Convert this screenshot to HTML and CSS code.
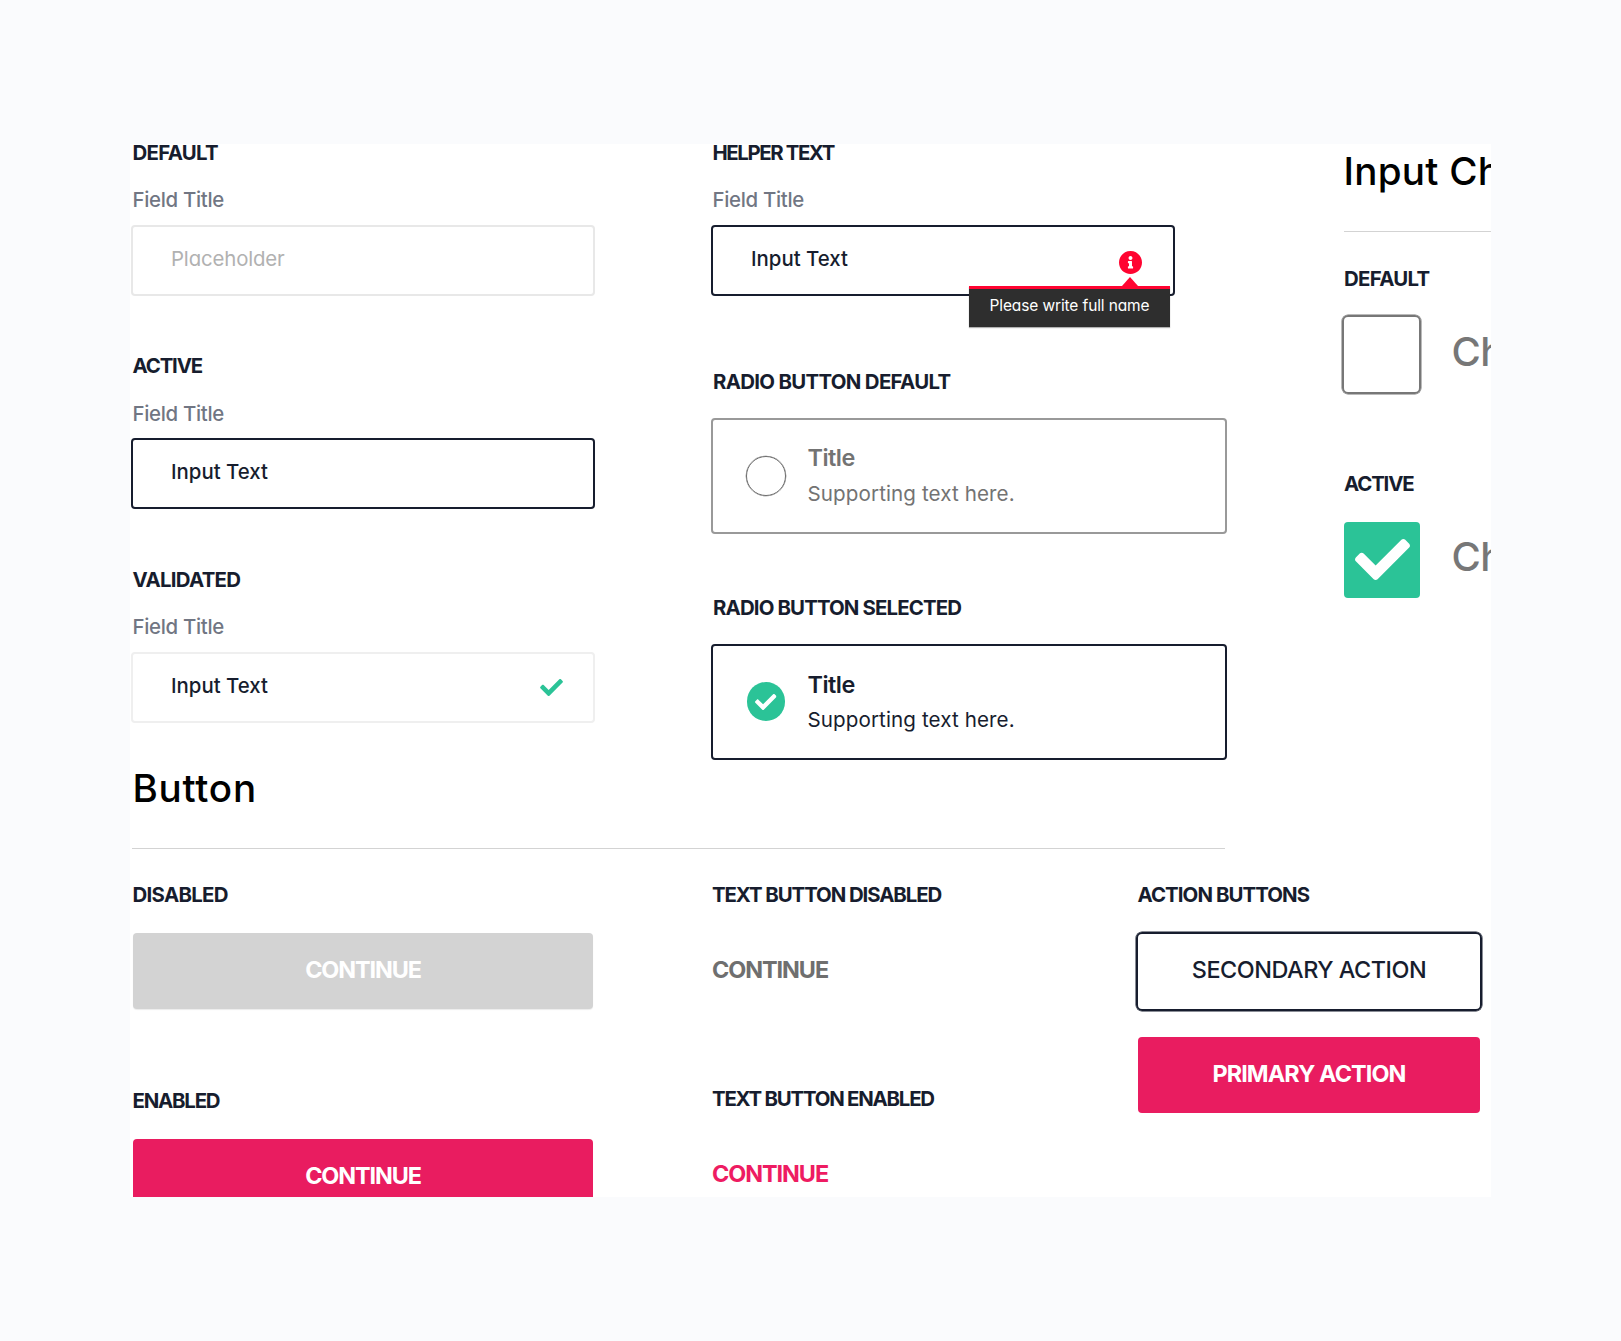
FILE: index.html
```html
<!DOCTYPE html>
<html lang="en">
<head>
<meta charset="utf-8">
<title>Form components</title>
<link rel="stylesheet" href="styles.css">
</head>
<body>
<svg class="sprite" aria-hidden="true">
  <symbol id="check" viewBox="0 65 512 382"><path d="M173.898 439.404l-166.4-166.4c-9.997-9.997-9.997-26.206 0-36.204l36.203-36.204c9.997-9.998 26.207-9.998 36.204 0L192 312.69 432.095 72.596c9.997-9.997 26.207-9.997 36.204 0l36.203 36.204c9.997 9.997 9.997 26.206 0 36.204l-294.4 294.401c-9.998 9.997-26.207 9.997-36.204-.001z"/></symbol>
  <symbol id="info" viewBox="8 8 496 496"><path d="M256 8C119.043 8 8 119.083 8 256c0 136.997 111.043 248 248 248s248-111.003 248-248C504 119.083 392.957 8 256 8zm0 110c23.196 0 42 18.804 42 42s-18.804 42-42 42-42-18.804-42-42 18.804-42 42-42zm56 254c0 6.627-5.373 12-12 12h-88c-6.627 0-12-5.373-12-12v-24c0-6.627 5.373-12 12-12h12v-64h-12c-6.627 0-12-5.373-12-12v-24c0-6.627 5.373-12 12-12h64c6.627 0 12 5.373 12 12v100h12c6.627 0 12 5.373 12 12v24z"/></symbol>
</svg>
<main class="board">
  <div class="content">
    <div class="top">
      <section class="inputs">
        <div class="group">
          <h3 class="label">DEFAULT</h3>
          <p class="field-title">Field Title</p>
          <div class="field"><span class="placeholder">Placeholder</span></div>
        </div>
        <div class="group">
          <h3 class="label label-active">ACTIVE</h3>
          <p class="field-title">Field Title</p>
          <div class="field field-active"><span class="value">Input Text</span></div>
        </div>
        <div class="group">
          <h3 class="label">VALIDATED</h3>
          <p class="field-title">Field Title</p>
          <div class="field field-valid"><span class="value">Input Text</span><svg class="valid-icon"><use href="#check"/></svg></div>
        </div>
      </section>
      <section class="choices">
        <div class="group">
          <h3 class="label label-helper">HELPER TEXT</h3>
          <p class="field-title">Field Title</p>
          <div class="field field-active">
            <span class="value">Input Text</span>
            <svg class="info-icon"><use href="#info"/></svg>
            <div class="tooltip">Please write full name</div>
          </div>
        </div>
        <div class="radio-group">
          <h3 class="label label-radio">RADIO BUTTON DEFAULT</h3>
          <div class="radio">
            <span class="dot"></span>
            <div class="radio-text"><p class="radio-title">Title</p><p class="radio-sub">Supporting text here.</p></div>
          </div>
        </div>
        <div class="radio-group">
          <h3 class="label label-selected">RADIO BUTTON SELECTED</h3>
          <div class="radio radio-on">
            <span class="dot"><svg><use href="#check"/></svg></span>
            <div class="radio-text"><p class="radio-title">Title</p><p class="radio-sub">Supporting text here.</p></div>
          </div>
        </div>
      </section>
      <section class="checkboxes">
        <h2 class="heading heading-check">Input Ch</h2>
        <hr class="rule">
        <h3 class="label">DEFAULT</h3>
        <div class="check-row"><span class="box"></span><span class="check-text">Ch</span></div>
        <h3 class="label label-active">ACTIVE</h3>
        <div class="check-row"><span class="box box-on"><svg><use href="#check"/></svg></span><span class="check-text">Ch</span></div>
      </section>
    </div>
    <h2 class="heading heading-button">Button</h2>
    <hr class="rule rule-button">
    <div class="bottom">
      <section class="col">
        <h3 class="label">DISABLED</h3>
        <div class="btn btn-disabled">CONTINUE</div>
        <h3 class="label label-enabled">ENABLED</h3>
        <div class="btn btn-primary">CONTINUE</div>
      </section>
      <section class="col col-text">
        <h3 class="label label-text">TEXT BUTTON DISABLED</h3>
        <div class="text-btn">CONTINUE</div>
        <h3 class="label label-text label-text-on">TEXT BUTTON ENABLED</h3>
        <div class="text-btn text-btn-on">CONTINUE</div>
      </section>
      <section class="col col-actions">
        <h3 class="label label-actions">ACTION BUTTONS</h3>
        <div class="btn btn-secondary">SECONDARY ACTION</div>
        <div class="btn btn-primary btn-action">PRIMARY ACTION</div>
      </section>
    </div>
  </div>
</main>
</body>
</html>
```
FILE: styles.css
```css
* { box-sizing: border-box; margin: 0; padding: 0; }
body {
  min-height: 1341px;
  padding: 144px 130px;
  background: #fafbfd;
  color: #171d2e;
  font-family: Inter, "Liberation Sans", sans-serif;
  font-feature-settings: "cv11";
  white-space: nowrap;
  overflow: hidden;
}
.sprite { display: none; }
.board { width: 1361px; height: 1053px; background: #fff; overflow: hidden; }
.content { width: 1600px; margin-top: -3.2px; padding-left: 1px; }

.top { display: flex; height: 624px; }
.inputs, .choices { display: flex; flex-direction: column; }
.inputs { width: 580px; }
.choices { width: 631px; }

.label { padding-left: 1.5px; font-size: 20.4px; font-weight: 650; line-height: 24px; letter-spacing: -0.7px; }
.label-active { letter-spacing: -1.15px; }
.label-helper { letter-spacing: -1.4px; }
.label-radio { letter-spacing: -0.68px; }
.label-selected { letter-spacing: -0.86px; }
.label-text { letter-spacing: -1.07px; }
.label-text-on { letter-spacing: -1.22px; }
.label-enabled { letter-spacing: -1.2px; }
.label-actions { letter-spacing: -0.92px; }

.group { width: 464px; margin-bottom: 58.2px; }
.field-title { margin-top: 23.6px; padding-left: 1.5px; color: #717683; font-size: 20.4px; font-weight: 500; line-height: 24px; letter-spacing: -0.3px; }
.field {
  position: relative;
  display: flex;
  height: 71px;
  margin-top: 12.6px;
  padding: 20.1px 28px 0 38px;
  border: 2px solid #e8e8e8;
  border-radius: 4px;
  font-size: 20.4px;
  line-height: 24px;
  justify-content: space-between;
}
.field-active { border-color: #171d2e; }
.field-valid { border-color: #efefef; }
.placeholder { color: #b1b1b1; letter-spacing: -0.15px; }
.value { font-weight: 530; letter-spacing: 0; }
.valid-icon { width: 23px; height: 17px; margin: 5.5px 2.5px 0 0; fill: #2bc397; }
.info-icon { width: 23px; height: 23px; margin: 4px 3px 0 0; fill: #ff0431; }
.tooltip {
  position: absolute;
  top: 59px;
  right: 3px;
  width: 201px;
  height: 41px;
  padding-top: 7px;
  border-top: 3px solid #ff0431;
  background: #2e2e2e;
  box-shadow: 0 1px 1px rgba(0, 0, 0, .3);
  color: #fff;
  font-size: 15.5px;
  line-height: 20px;
  letter-spacing: -0.12px;
  text-align: center;
}
.tooltip::before {
  content: "";
  position: absolute;
  top: -12px;
  left: 153px;
  border: solid transparent;
  border-width: 0 8px 9px;
  border-bottom-color: #ff0431;
}

.radio-group { width: 516px; margin-top: 15.5px; margin-bottom: 46.6px; }
.radio-group .label { padding-left: 2px; }
.radio {
  display: flex;
  height: 116px;
  margin-top: 24px;
  padding: 24.8px 0 0 33px;
  border: 2px solid #999;
  border-radius: 4px;
  color: #737373;
}
.dot { width: 40px; height: 40px; margin: 11.3px 21.5px 0 0; border: 1.5px solid #6c6c6c; border-radius: 50%; box-shadow: 0 0 0 .3px #6c6c6c; }
.radio-on { border-color: #171d2e; color: #171d2e; }
.radio-on .dot { display: flex; align-items: center; justify-content: center; border: 0; width: 38.5px; height: 38.5px; margin: 11.8px 22.2px 0 .8px; background: #2bc397; box-shadow: none; }
.dot svg { width: 21.5px; height: 16px; fill: #fff; }
.radio-title { font-size: 23.4px; font-weight: 600; line-height: 28px; letter-spacing: -0.5px; }
.radio-sub { margin-top: 9.3px; font-size: 20.6px; line-height: 24px; letter-spacing: 0.1px; }

.heading { color: #000; font-size: 38.6px; font-weight: 540; line-height: 46px; }
.heading-check { margin-top: 7.4px; padding-left: 1.5px; letter-spacing: 0.25px; }
.heading-button { padding-left: 1.5px; letter-spacing: 0.75px; }
.rule { height: 1px; margin: 37px 0 0 2px; border: 0; background: #d3d3d3; }
.rule-button { width: 1093px; margin-left: 1px; }
.checkboxes .label { margin-top: 34.6px; padding-left: 2px; }
.checkboxes .label-active { margin-top: 76.6px; }
.check-row { display: flex; margin-top: 24.4px; }
.box { width: 79px; height: 79px; margin: 0 1px 1px 0; border: 2px solid #777; border-radius: 6px; box-shadow: 0 0 0 .5px #777; }
.box-on { display: flex; align-items: center; justify-content: center; width: 76px; height: 76px; margin: 2px 2px 2px; border: 0; border-radius: 4px; background: #2bc397; box-shadow: none; }
.box-on svg { width: 55px; height: 41px; margin-bottom: 1px; fill: #fff; }
.check-text { padding: 12.5px 0 0 29.5px; color: #777; font-size: 40px; font-weight: 550; line-height: 48px; letter-spacing: -0.5px; }

.bottom { display: flex; margin-top: 34.3px; }
.col { width: 579px; padding-left: 1px; }
.bottom .col:first-child { width: 580px; padding-left: 2px; }
.col .label { padding-left: 0; }
.bottom .col:first-child .label { margin-left: -.5px; }
.btn {
  width: 460px;
  height: 76px;
  margin-top: 26px;
  padding-top: 23px;
  border-radius: 4px;
  color: #fff;
  font-size: 23.4px;
  font-weight: 650;
  line-height: 28px;
  letter-spacing: -1.1px;
  text-align: center;
}
.btn-disabled { background: #d3d3d3; box-shadow: 0 1px 1px rgba(0, 0, 0, .08); }
.btn-primary { background: #e91c60; }
.col .label-enabled { margin-top: 79.8px; }
.col-text { width: 425px; }
.col .label-text { padding-left: 0; }
.text-btn { margin-top: 48.8px; color: #6f6f6f; font-size: 23.4px; font-weight: 650; line-height: 28px; letter-spacing: -1.05px; }
.text-btn-on { color: #ee1c62; }
.col .label-text-on { margin-top: 103.2px; }
.col-actions { padding-left: 0; }
.col .label-actions { padding-left: 1.5px; }
.btn-secondary { width: 346px; height: 79px; margin: 24.5px 0 0; padding-top: 22.4px; border: 2px solid #171d2e; border-radius: 6px; box-shadow: 0 0 0 .5px #171d2e; color: #171d2e; font-weight: 500; letter-spacing: -0.47px; }
.btn-action { width: 342px; margin: 26px 0 0 2px; letter-spacing: -0.88px; }
```
